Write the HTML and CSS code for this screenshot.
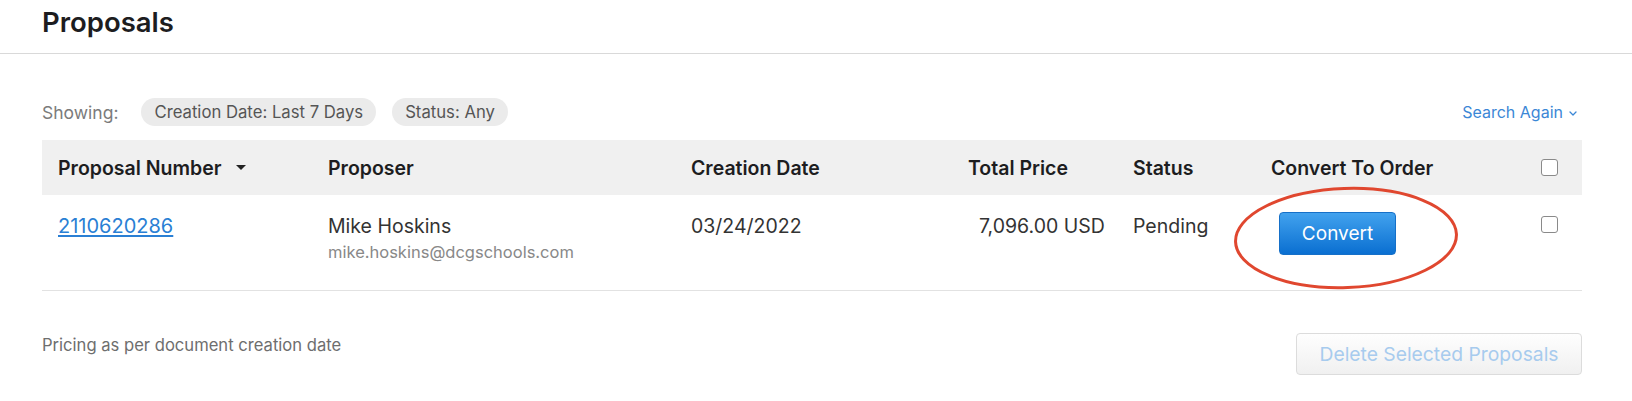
FILE: index.html
```html
<!DOCTYPE html>
<html lang="en">
<head>
<meta charset="utf-8">
<title>Proposals</title>
<link rel="stylesheet" href="styles.css">
</head>
<body>
<header class="page-head">
  <h1 class="title">Proposals</h1>
</header>
<main class="content">
  <div class="filters">
    <div class="filter-list">
      <span class="showing">Showing:</span>
      <span class="chip">Creation Date: Last 7 Days</span>
      <span class="chip">Status: Any</span>
    </div>
    <a class="search-again" href="#">Search Again
      <svg class="chevron" width="8" height="5" viewBox="0 0 8 5"><path d="M1 1l3 3 3-3" fill="none" stroke="currentColor" stroke-width="1.3" stroke-linecap="round" stroke-linejoin="round"/></svg>
    </a>
  </div>
  <div class="table">
    <div class="row head">
      <div class="cell c-num">Proposal Number
        <svg class="sort" width="10" height="5" viewBox="0 0 10 5"><polygon points="0,0 10,0 5,5" fill="#222"/></svg>
      </div>
      <div class="cell">Proposer</div>
      <div class="cell">Creation Date</div>
      <div class="cell">Total Price</div>
      <div class="cell">Status</div>
      <div class="cell">Convert To Order</div>
      <div class="cell c-check"><span class="checkbox"></span></div>
    </div>
    <div class="row body-row">
      <div class="cell"><a class="link" href="#">2110620286</a></div>
      <div class="cell">
        <div class="name">Mike Hoskins</div>
        <div class="email">mike.hoskins@dcgschools.com</div>
      </div>
      <div class="cell">03/24/2022</div>
      <div class="cell c-price">7,096.00 USD</div>
      <div class="cell">Pending</div>
      <div class="cell c-convert"><button class="convert-btn">Convert</button></div>
      <div class="cell c-check-body"><span class="checkbox"></span></div>
      <svg class="highlight" width="226" height="104" viewBox="0 0 226 104"><ellipse cx="113" cy="52" rx="110.5" ry="49.5" fill="none" stroke="#e0472f" stroke-width="3" transform="rotate(-2 113 52)"/></svg>
    </div>
  </div>
  <div class="footer">
    <span class="note">Pricing as per document creation date</span>
    <button class="delete-btn">Delete Selected Proposals</button>
  </div>
</main>
</body>
</html>
```
FILE: styles.css
```css
html, body {
  margin: 0;
  padding: 0;
  background: #fff;
}
body {
  font-family: Inter, "Noto Sans", "Liberation Sans", sans-serif;
  color: #1d1d1f;
}
.page-head {
  padding: 6px 42px 15px;
  border-bottom: 1px solid #d9d9d9;
}
.title {
  margin: 0;
  font-size: 27.5px;
  line-height: 32px;
  font-weight: 600;
  color: #1d1d1f;
}
.content {
  padding: 0 50px 0 42px;
}
.filters {
  display: flex;
  justify-content: space-between;
  align-items: center;
  margin-top: 44px;
  height: 28px;
  margin-bottom: 14px;
}
.filter-list {
  display: flex;
  align-items: center;
}
.showing {
  font-size: 17.5px;
  color: #7b7b7b;
  margin-right: 23px;
}
.chip {
  display: inline-flex;
  align-items: center;
  height: 28px;
  padding: 0 13px;
  margin-right: 16px;
  border-radius: 14px;
  background: #ebebeb;
  font-size: 16.7px;
  color: #555;
}
.search-again {
  display: flex;
  align-items: center;
  gap: 6px;
  margin-right: 5px;
  color: #3b87d6;
  font-size: 16px;
  text-decoration: none;
}
.chevron {
  margin-top: 2px;
}
.row {
  display: grid;
  grid-template-columns: 270px 363px 277px 165px 138px 270px 1fr;
  padding-left: 16px;
  position: relative;
}
.head {
  height: 55px;
  align-items: center;
  background: #f0f0f0;
  font-size: 19.5px;
  font-weight: 600;
  color: #1d1d1f;
}
.cell {
  line-height: 24px;
}
.c-num {
  display: flex;
  align-items: center;
}
.sort {
  margin-left: 15px;
}
.checkbox {
  display: block;
  width: 15px;
  height: 15px;
  border: 1.5px solid #8a8a8a;
  border-radius: 3px;
  background: #fff;
}
.c-check {
  display: flex;
  align-items: center;
}
.body-row {
  box-sizing: border-box;
  height: 96px;
  padding-top: 19px;
  align-items: start;
  border-bottom: 1px solid #e2e2e2;
  font-size: 19.5px;
  color: #333;
}
.link {
  font-size: 20px;
  color: #2a7fd4;
  text-decoration: underline;
  text-underline-offset: 2px;
}
.email {
  margin-top: 3px;
  font-size: 16.5px;
  line-height: 22px;
  color: #888;
}
.c-price {
  padding-left: 11px;
}
.c-convert {
  margin-top: -2px;
  padding-left: 8px;
}
.convert-btn {
  width: 117px;
  height: 43px;
  border: 1px solid #1670c8;
  border-radius: 4px;
  background: linear-gradient(#42a2ee, #0a6fd1);
  color: #fff;
  font-family: Inter, "Noto Sans", sans-serif;
  font-size: 19px;
  padding: 0;
}
.c-check-body {
  padding-top: 2px;
}
.highlight {
  position: absolute;
  left: 1191px;
  top: -9px;
}
.footer {
  display: flex;
  justify-content: space-between;
  align-items: flex-start;
  margin-top: 42px;
}
.note {
  margin-top: 2px;
  font-size: 16.6px;
  line-height: 20px;
  color: #6e6e6e;
}
.delete-btn {
  width: 286px;
  height: 42px;
  border: 1px solid #dcdcdc;
  border-radius: 4px;
  background: linear-gradient(#fefefe, #f0f0f0);
  color: #a7cbee;
  font-family: Inter, "Noto Sans", sans-serif;
  font-size: 19.3px;
  padding: 0;
}
```
